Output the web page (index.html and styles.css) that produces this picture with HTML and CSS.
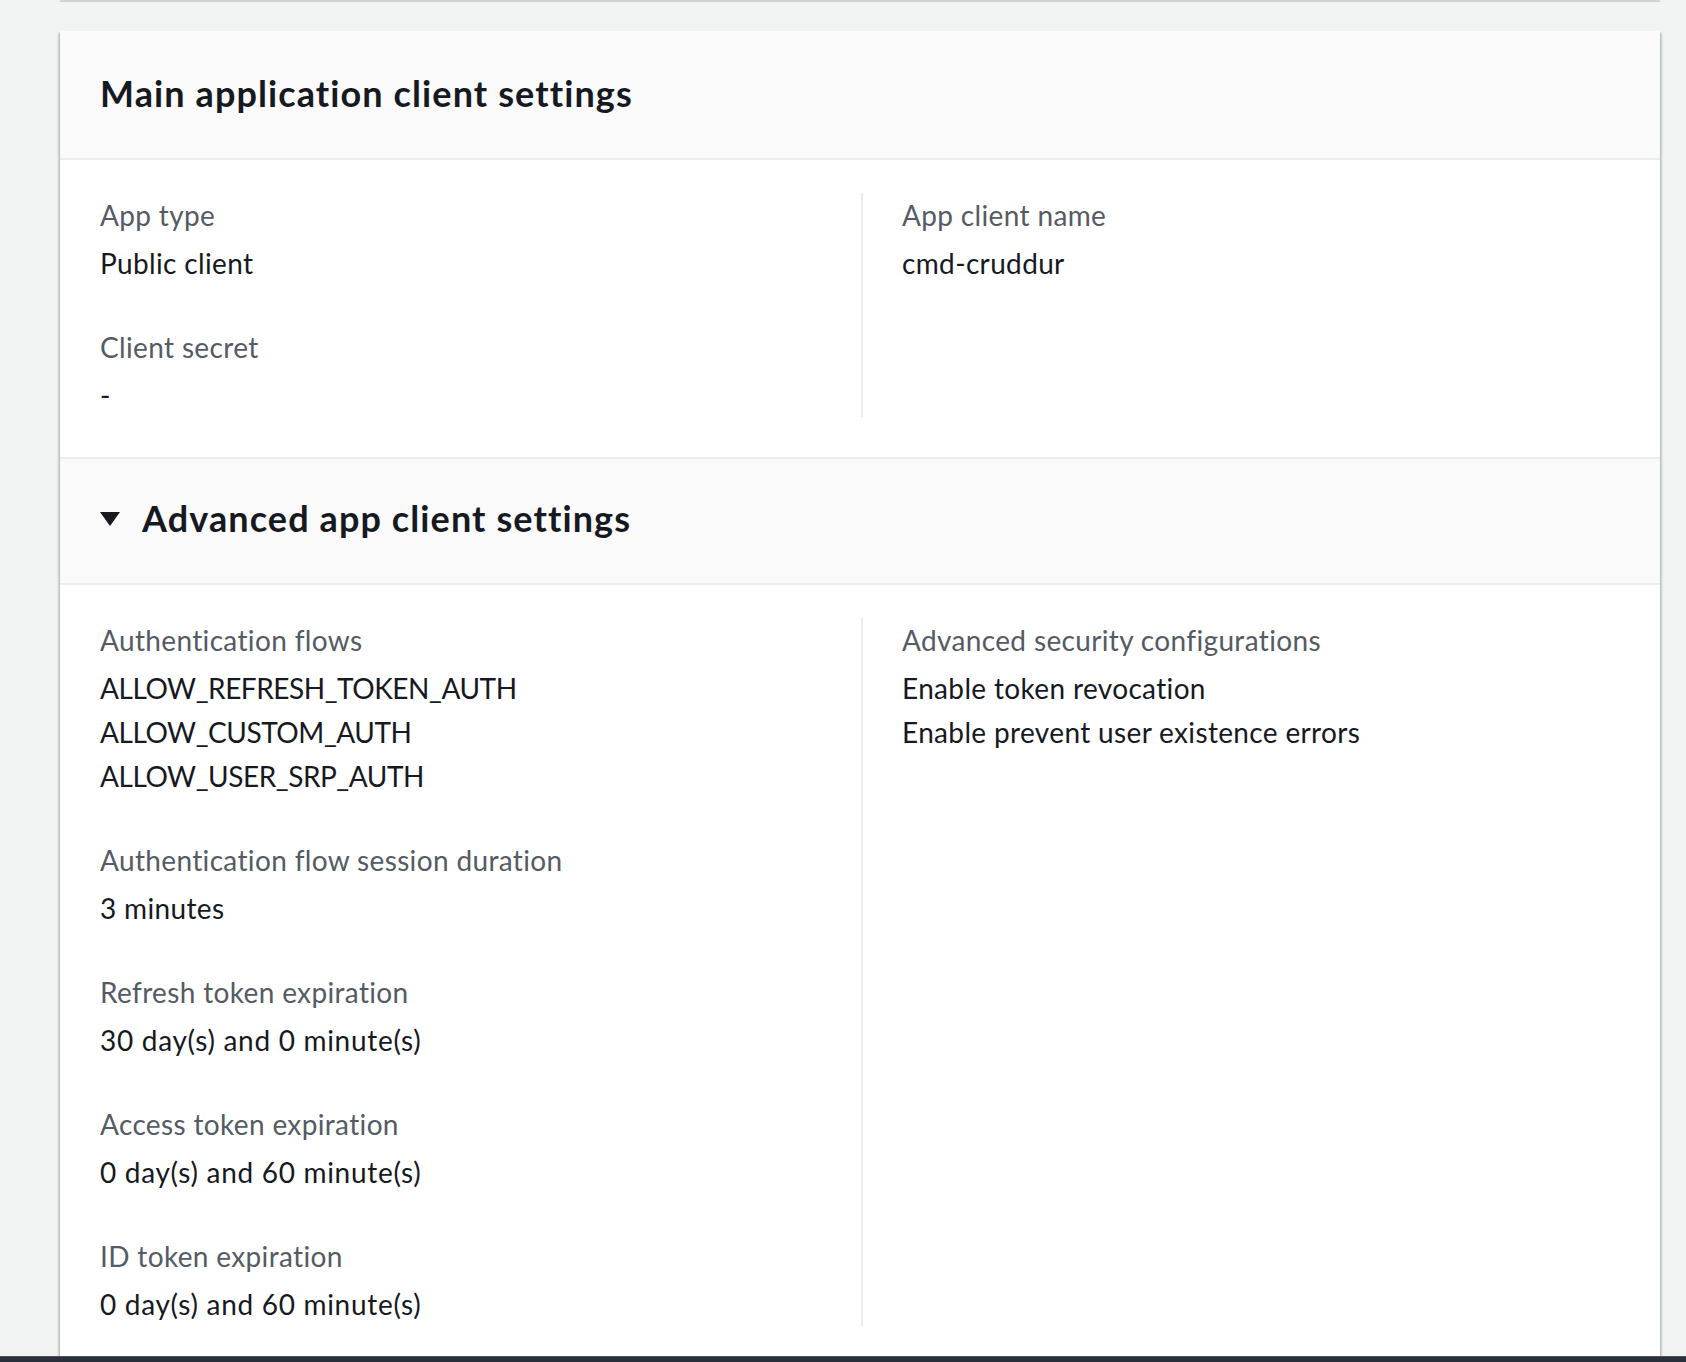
FILE: index.html
```html
<!DOCTYPE html>
<html lang="en">
<head>
<meta charset="utf-8">
<title>App client settings</title>
<link rel="stylesheet" href="styles.css">
</head>
<body>
<div class="page">
  <div class="prev-card"></div>
  <section class="card">
    <header class="card-header">
      <h2 class="card-title">Main application client settings</h2>
    </header>
    <div class="card-body">
      <div class="columns">
        <div class="col">
          <div class="kv">
            <div class="kv-label">App type</div>
            <div class="kv-value">Public client</div>
          </div>
          <div class="kv">
            <div class="kv-label">Client secret</div>
            <div class="kv-value">-</div>
          </div>
        </div>
        <div class="col col-right">
          <div class="kv">
            <div class="kv-label">App client name</div>
            <div class="kv-value">cmd-cruddur</div>
          </div>
        </div>
      </div>
    </div>
    <header class="card-header card-header-expand">
      <h2 class="card-title"><span class="caret"><svg width="20" height="14" viewBox="0 0 20 14"><path d="M0 0H20L10 14Z" fill="#16191f"/></svg></span>Advanced app client settings</h2>
    </header>
    <div class="card-body card-body-adv">
      <div class="columns">
        <div class="col">
          <div class="kv">
            <div class="kv-label">Authentication flows</div>
            <div class="kv-value kv-caps">ALLOW_REFRESH_TOKEN_AUTH</div>
            <div class="kv-value kv-caps">ALLOW_CUSTOM_AUTH</div>
            <div class="kv-value kv-caps">ALLOW_USER_SRP_AUTH</div>
          </div>
          <div class="kv">
            <div class="kv-label">Authentication flow session duration</div>
            <div class="kv-value">3 minutes</div>
          </div>
          <div class="kv">
            <div class="kv-label">Refresh token expiration</div>
            <div class="kv-value kv-num">30 day(s) and 0 minute(s)</div>
          </div>
          <div class="kv">
            <div class="kv-label">Access token expiration</div>
            <div class="kv-value kv-num">0 day(s) and 60 minute(s)</div>
          </div>
          <div class="kv">
            <div class="kv-label">ID token expiration</div>
            <div class="kv-value kv-num">0 day(s) and 60 minute(s)</div>
          </div>
        </div>
        <div class="col col-right">
          <div class="kv">
            <div class="kv-label">Advanced security configurations</div>
            <div class="kv-value">Enable token revocation</div>
            <div class="kv-value">Enable prevent user existence errors</div>
          </div>
        </div>
      </div>
    </div>
  </section>
</div>
<div class="footer-bar"></div>
</body>
</html>
```
FILE: styles.css
```css
html, body {
  margin: 0;
  padding: 0;
}
body {
  background: #f2f3f3;
  font-family: Lato, "Liberation Sans", sans-serif;
  color: #16191f;
  height: 1362px;
  overflow: hidden;
}
.page {
  padding: 0 26px 0 60px;
}
.prev-card {
  height: 2px;
  background: #d0d4d6;
  margin-bottom: 29px;
}
.card {
  background: #ffffff;
  box-shadow: 0 2px 2px 0 rgba(0, 28, 36, 0.3), 2px 2px 2px 0 rgba(0, 28, 36, 0.15), -2px 2px 2px 0 rgba(0, 28, 36, 0.15);
}
.card-header {
  background: #fafafa;
  box-sizing: content-box;
  height: 123px;
  padding: 0 40px 4px;
  display: flex;
  align-items: center;
  border-bottom: 2px solid #eaeded;
}
.card-header-expand {
  border-top: 2px solid #eaeded;
  height: 118px;
  padding-bottom: 6px;
}
.card-title {
  margin: 0;
  font-size: 36px;
  line-height: 44px;
  font-weight: 700;
  letter-spacing: 1.1px;
  display: flex;
  align-items: center;
}
.caret {
  display: inline-flex;
  width: 42px;
  margin-top: 2px;
}
.card-body {
  padding: 33px 40px 40px;
}
.card-body-adv {
  padding-top: 33px;
}
.columns {
  display: grid;
  grid-template-columns: 761px 1fr;
}
.col {
  display: flex;
  flex-direction: column;
  gap: 40px;
}
.col-right {
  border-left: 2px solid #eaeded;
  padding-left: 39px;
}
.kv-label {
  font-size: 28px;
  line-height: 44px;
  letter-spacing: 0.35px;
  color: #545b64;
  margin-bottom: 4px;
}
.kv-value {
  font-size: 28px;
  line-height: 44px;
  letter-spacing: 0.35px;
  color: #16191f;
}
.kv-caps {
  letter-spacing: -0.45px;
}
.kv-num {
  letter-spacing: 0.7px;
}
.footer-bar {
  position: fixed;
  left: 0;
  right: 0;
  bottom: 0;
  height: 5px;
  background: #2a303b;
  border-top: 1px solid #4a5059;
}
```
